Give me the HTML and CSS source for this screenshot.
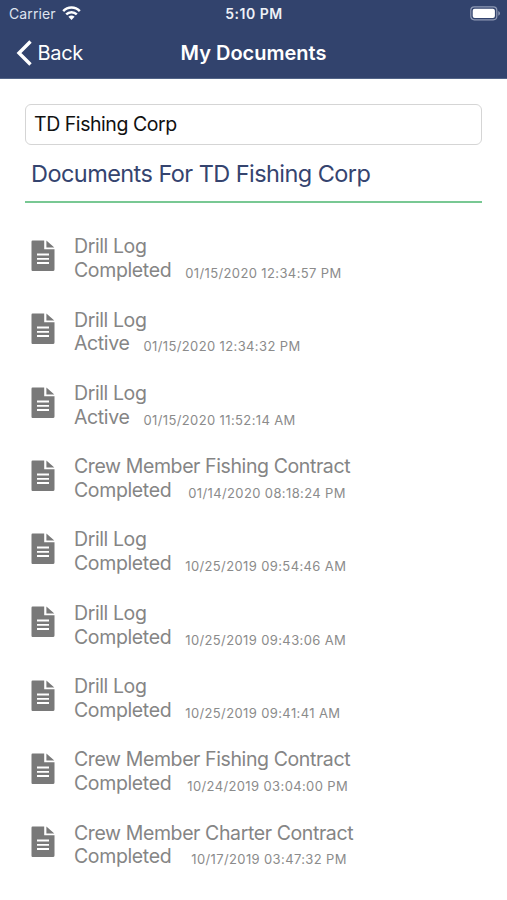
FILE: index.html
```
<!DOCTYPE html>
<html lang="en">
<head>
<meta charset="utf-8">
<meta name="viewport" content="width=device-width, initial-scale=1">
<title>My Documents</title>
<link rel="stylesheet" href="styles.css">
</head>
<body>
<svg class="defs" aria-hidden="true"><symbol id="doc" viewBox="0 0 24 32"><path fill="currentColor" fill-rule="evenodd" d="M1.5 .5H13.2V9.3H23.5V29.5Q23.5 31 22 31H1.5Q.5 31 .5 29.8V1.7Q.5 .5 1.5 .5ZM6 13.6V15.5H18V13.6ZM6 17.9V19.8H18V17.9ZM6 22.1V24H18V22.1ZM15.4 .5L23.3 7.6H15.4Z"/></symbol></svg>
<header class="header">
  <div class="status">
    <div class="carrier"><span>Carrier</span>
      <svg class="wifi" width="19" height="15" viewBox="0 0 19 15"><g fill="none" stroke="currentColor" stroke-width="2.5"><path d="M1.2 5.2C5.8.4 13.2.4 17.8 5.2"/><path d="M4.2 8.4C7.2 5.4 11.8 5.4 14.8 8.4"/></g><path fill="currentColor" d="M6.4 10.7Q9.5 8.2 12.6 10.7L9.5 13.9Z"/></svg>
    </div>
    <div class="time">5:10 PM</div>
    <svg class="battery" width="31" height="15" viewBox="0 0 31 15"><rect x=".8" y=".8" width="26" height="13" rx="3.5" fill="none" stroke="#8f9ab5" stroke-width="1.2"/><rect x="2.7" y="2.7" width="22.2" height="9.2" rx="2" fill="#fff"/><path d="M28.3 5.1Q30 6 30 7.4T28.3 9.7Z" fill="#8f9ab5"/></svg>
  </div>
  <nav class="nav">
    <div class="back"><svg width="17" height="28" viewBox="0 0 17 28"><path d="M15.5 2.5L4 14L15.5 25.5" fill="none" stroke="currentColor" stroke-width="3.4"/></svg><span>Back</span></div>
    <h1 class="title">My Documents</h1>
  </nav>
</header>
<main class="main">
  <div class="field">TD Fishing Corp</div>
  <h2 class="heading"><span>Documents For TD Fishing Corp</span></h2>
  <ul class="list">
    <li class="item"><svg class="icon"><use href="#doc"/></svg><div class="text"><p class="name">Drill Log</p><p class="meta"><span class="state">Completed</span><time class="date">01/15/2020 12:34:57 PM</time></p></div></li>
    <li class="item"><svg class="icon"><use href="#doc"/></svg><div class="text"><p class="name">Drill Log</p><p class="meta"><span class="state">Active</span><time class="date">01/15/2020 12:34:32 PM</time></p></div></li>
    <li class="item"><svg class="icon"><use href="#doc"/></svg><div class="text"><p class="name">Drill Log</p><p class="meta"><span class="state">Active</span><time class="date">01/15/2020 11:52:14 AM</time></p></div></li>
    <li class="item"><svg class="icon"><use href="#doc"/></svg><div class="text"><p class="name">Crew Member Fishing Contract</p><p class="meta wide"><span class="state">Completed</span><time class="date">01/14/2020 08:18:24 PM</time></p></div></li>
    <li class="item"><svg class="icon"><use href="#doc"/></svg><div class="text"><p class="name">Drill Log</p><p class="meta"><span class="state">Completed</span><time class="date">10/25/2019 09:54:46 AM</time></p></div></li>
    <li class="item"><svg class="icon"><use href="#doc"/></svg><div class="text"><p class="name">Drill Log</p><p class="meta"><span class="state">Completed</span><time class="date">10/25/2019 09:43:06 AM</time></p></div></li>
    <li class="item"><svg class="icon"><use href="#doc"/></svg><div class="text"><p class="name">Drill Log</p><p class="meta"><span class="state">Completed</span><time class="date">10/25/2019 09:41:41 AM</time></p></div></li>
    <li class="item"><svg class="icon"><use href="#doc"/></svg><div class="text"><p class="name">Crew Member Fishing Contract</p><p class="meta medium"><span class="state">Completed</span><time class="date">10/24/2019 03:04:00 PM</time></p></div></li>
    <li class="item"><svg class="icon"><use href="#doc"/></svg><div class="text"><p class="name">Crew Member Charter Contract</p><p class="meta widest"><span class="state">Completed</span><time class="date">10/17/2019 03:47:32 PM</time></p></div></li>
  </ul>
</main>
</body>
</html>
```
FILE: styles.css
```
* { box-sizing: border-box; }
body { margin: 0; background: #fff; font-family: Inter, "Liberation Sans", sans-serif; height: 900px; overflow: hidden; }
svg { display: block; flex: none; }
h1, h2, p, ul { margin: 0; padding: 0; }
.defs { display: none; }
.header { height: 79px; background: #32436d; color: #fff; border-bottom: 1px solid #526487; }
.status { height: 27px; display: grid; grid-template-columns: 1fr auto 1fr; align-items: center; padding: 0 6px 0 9px; }
.carrier { display: flex; align-items: center; gap: 6px; font-size: 14px; letter-spacing: .1px; color: #dfe4ef; }
.wifi { color: #fff; }
.time { font-size: 14px; font-weight: 600; letter-spacing: .5px; margin-right: 2px; color: #eef1f7; }
.battery { justify-self: end; }
.nav { height: 51px; display: grid; grid-template-columns: 1fr auto 1fr; align-items: center; padding: 0 15px 0 15px; }
.back { display: flex; align-items: center; gap: 5.5px; font-size: 20px; letter-spacing: -.3px; }
.title { font-size: 20px; font-weight: 600; letter-spacing: 0; }
.main { padding: 25px 25px 0; }
.field { height: 41px; border: 1px solid #d5d5d5; border-radius: 6px; padding: 0 8px; font-size: 19.5px; line-height: 39px; letter-spacing: -.45px; color: #111; white-space: nowrap; }
.heading { height: 58px; border-bottom: 2px solid #78c893; padding: 0 6px; font-size: 23.5px; font-weight: 400; line-height: 57px; letter-spacing: -.56px; color: #35446f; white-space: nowrap; }
.list { list-style: none; padding: 32px 0 0 6px; }
.item { height: 73.3px; display: flex; gap: 19px; white-space: nowrap; color: #858585; }
.icon { width: 24px; height: 32px; margin-top: 5px; color: #797979; }
.text { margin-top: .3px; }
.name { font-size: 19.5px; line-height: 23.8px; letter-spacing: -.4px; }
.meta { display: flex; align-items: baseline; gap: 14px; line-height: 23.8px; }
.medium { gap: 16px; }
.wide { gap: 17px; }
.widest { gap: 20px; }
.state { font-size: 19.5px; letter-spacing: -.37px; }
.date { font-size: 13px; position: relative; top: 1px; letter-spacing: .38px; color: #8b8b8b; }
```
